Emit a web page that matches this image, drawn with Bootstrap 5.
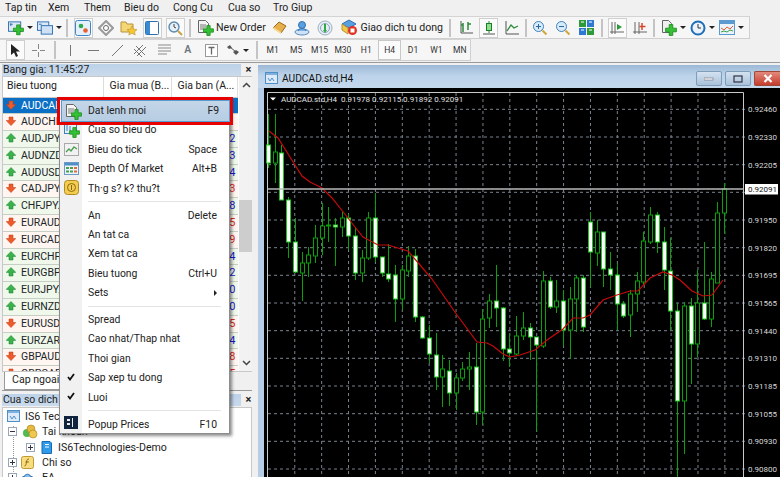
<!DOCTYPE html>
<html lang="vi">
<head>
<meta charset="utf-8">
<title>MetaTrader</title>
<link href="https://cdn.jsdelivr.net/npm/bootstrap@5.3.0/dist/css/bootstrap.min.css" rel="stylesheet">
<style>
html,body{height:100%}
body{width:780px;height:477px;overflow:hidden;background:#f0f0f0;font-family:Roboto,"Liberation Sans",sans-serif;font-size:10.5px;color:#222;position:relative}
.mt-menubar{height:16px;line-height:15px;font-size:10.5px;position:relative}
.mt-menubar span{position:absolute;top:0}
.mt-tools{height:23px;background:#f6f6f6;border-top:1px solid #d4d4d4;border-bottom:1px solid #cfcfcf;flex:none}
.mt-t1{width:750px;border-right:1px solid #d0d0d0}
.mt-t2{width:471px;border-right:1px solid #d0d0d0;height:22px;margin-top:0}
.mt-grip{width:3.5px;height:100%;flex:none}
.mt-btn{width:23px;height:20px;flex:none;display:flex;align-items:center;justify-content:center;position:relative}
.mt-t2 .mt-btn{width:23.5px}
.mt-btn.on::before{content:"";position:absolute;left:2px;right:2px;top:0;bottom:0;background:#fbfbfb;border:1px solid #cfcfcf}
.mt-btn svg{position:relative}
.mt-cbtn{width:29px;height:20px;flex:none;display:flex;align-items:center;padding-left:4px;gap:3px}
.mt-caret{width:0;height:0;border-left:3px solid transparent;border-right:3px solid transparent;border-top:3px solid #222}
.mt-sep{flex:none;height:18px;display:flex;justify-content:center}
.mt-sep::before{content:"";width:2px;background:#c4c4c4;height:100%}
.sw10{width:10px}.sw7{width:7.5px}.sw9{width:9px}.sw5{width:5.5px}.sw8{width:8px}
.mt-lbtn{height:20px;display:flex;align-items:center;flex:none;font-size:10.6px;white-space:nowrap}
.lb-order{width:73.5px;padding-left:3px;gap:2px}
.lb-auto{width:108.5px;padding-left:4px;gap:3px}
.mt-per{width:23.4px;height:20px;flex:none;display:flex;align-items:center;justify-content:center;font-size:8.5px;color:#333}
.mt-per.on{background:#fbfbfb;border:1px solid #c8c8c8}
.mt-work{height:415px;border-top:1px solid #9a9a9a;margin-top:1px}
.mt-left{width:254px;flex:none;padding-top:1px}
.mt-ptitle{height:12px;line-height:12px;width:240px;margin-left:2px;background:linear-gradient(#bdd2e8,#c9daec);padding-left:1px;font-size:10.5px;color:#222;white-space:nowrap}
.mt-x{font-size:11px;font-weight:700;line-height:12px;width:14px;text-align:center;color:#222;margin-left:-1px;padding-left:3px}
.mt-grid{height:296px;margin:0 0 0 2px;background:#fff;border:1px solid #c8c8c8;border-right:0;overflow:hidden;width:250px}
.mt-tablewrap{width:235px;flex:none;overflow:hidden}
.mt-table{width:235px;table-layout:fixed;margin:0;border-collapse:collapse;font-size:10.5px}
.mt-table th{height:20px;font-weight:400;font-size:10.5px;padding:0 0 2px 4px;vertical-align:middle;border-right:1px solid #ddd;border-bottom:1px solid #c8c8c8;white-space:nowrap;overflow:hidden;background:#fff;color:#222}
.mt-table th.c2,.mt-table th.c3{padding-left:6px}
.mt-table td{height:16.8px;padding:0;line-height:15px;border-bottom:1px solid #c6cfc6;white-space:nowrap;overflow:hidden;box-sizing:border-box}
.mt-table .c1{width:100px}.mt-table .c2{width:68px}
.mt-table td.sym{padding-left:3px}
.mt-table td svg{vertical-align:-1px;margin-right:5px}
.mt-table td.px{text-align:right;padding-right:2px;font-size:11px}
.r-up td{background:#eff8ea}
.r-dn td{background:#fff6f1}
.mt-table .r-sel td{background:#0b6fc6;color:#fff}
.mt-table td.px-b{color:#1a1ad0}.mt-table td.px-r{color:#e0281e}
.mt-scroll{width:14px;flex:none;background:#f2f2f2;margin-left:1px}
.mt-arrow{height:16px;display:flex;align-items:center;justify-content:center;flex:none}
.mt-thumb{height:52px;margin-top:107px;background:#cdcdcd}
.mt-tabs{height:19px;margin-left:2px;width:250px;border-bottom:1px solid #9a9a9a}
.mt-tab{width:62px;height:18px;background:#fff;border:1px solid #9a9a9a;border-top:0;padding-left:7px;font-size:10.6px;line-height:16px;margin-left:2px;color:#222;white-space:nowrap;overflow:hidden}
.mt-title2{margin-top:3px}
.mt-tree{height:74px;margin:1px 0 0 2px;padding-top:1px;background:#fff;border:1px solid #c8c8c8;width:250px;font-size:10.6px;position:relative;overflow:hidden;line-height:15px}
.mt-tree::before{content:"";position:absolute;left:10px;top:18px;bottom:0;border-left:1px dotted #999}
.mt-node{height:15.3px;display:flex;align-items:center;gap:3px;white-space:nowrap}
.nl0{padding-left:2px}.nl1{padding-left:5px}.nl2{padding-left:23px}
.mt-box{width:9px;height:9px;border:1px solid #9aa5b5;background:#fff;flex:none;position:relative;z-index:1}
.mt-box::before{content:"";position:absolute;left:1px;right:1px;top:3px;height:1px;background:#334}
.mt-box.pl::after{content:"";position:absolute;top:1px;bottom:1px;left:3px;width:1px;background:#334}
.mt-win{width:526px;flex:none;padding:2px 0 0 4px;overflow:hidden}
.mt-frame{width:522px;height:412px;background:#b6cde5;padding-left:6px;flex:none}
.mt-wtitle{height:23px;flex:none;margin-left:-6px;padding:4px 0 0 7px;background:linear-gradient(#9cb9d6,#bcd3ea 45%,#c4d8ec);font-size:10.2px;gap:3px;display:flex;align-items:center;color:#111}
.mt-wbtn{height:15px;border:1px solid #7f9cb8;border-radius:2px;background:linear-gradient(#d4e2f0,#a9c2da);flex:none;display:flex;align-items:center;justify-content:center;width:26px}
.mt-wbtn+.mt-wbtn{margin-left:3px}
.mt-wbtn.cls{background:linear-gradient(#e2897c,#c53c2c);border-color:#a04838;width:26px;border-right:0;border-radius:2px 0 0 2px;color:#fff}
.mt-chart{display:block;background:#000}
.mt-chart text{font-family:Roboto,"Liberation Sans",sans-serif}
.mt-pop{left:59px;top:97px;width:171px;height:337px;padding:2.8px 0 0;border:1px solid #8e8e8e;border-radius:0;box-shadow:2px 2px 3px rgba(0,0,0,.45);background:linear-gradient(90deg,#f1f1f1 22px,#fff 22px);margin:0;z-index:5}
.mt-pop .dropdown-item{height:19.4px;line-height:19px;padding:0 12px 0 28px;display:flex;align-items:center;color:#222;position:relative;font-size:10.4px;background:none;white-space:nowrap}
.mt-pop .dropdown-item>svg{position:absolute;left:4px;top:2px}
.mt-pop .dropdown-item.hot{margin:-1.3px 1px;height:22px;background:linear-gradient(#c4d6e8,#b7cde3);border:1px solid #5b9bd0;padding:0 10px 0 26px}
.mt-pop .dropdown-item.hot>svg{left:3px;top:2px}
.mt-pop hr.dropdown-divider{margin:3.3px 8px 3.3px 28px;border-top:1px solid #e4e4e4;opacity:1;height:0}
.mt-tri{width:0;height:0;border-top:3px solid transparent;border-bottom:3px solid transparent;border-left:3px solid #222}
.mt-red{position:absolute;left:57px;top:97px;width:176px;height:28px;border:3px solid #e60000;z-index:6;pointer-events:none}
</style>
</head>
<body>
<svg width="0" height="0" class="position-absolute">
<defs>
<symbol id="plus" viewBox="0 0 10 10"><path d="M3.5 .5h3v3h3v3h-3v3h-3v-3h-3v-3h3z" fill="#35c035" stroke="#1a8a1a" stroke-width=".7"/></symbol>
<symbol id="up" viewBox="0 0 10 10"><path d="M5 .5 9.8 5.4H7V9H3V5.4H.2z" fill="#3ab34a" stroke="#157a30" stroke-width=".5"/></symbol>
<symbol id="dn" viewBox="0 0 10 10"><path d="M3 1h4v3.5h2.8L5 9.6.2 4.5H3z" fill="#ee5a2c" stroke="#bb3a14" stroke-width=".5"/></symbol>
</defs>
</svg>

<div class="mt-menubar">
<span style="left:5px">Tap tin</span><span style="left:48px">Xem</span><span style="left:84px">Them</span><span style="left:124px">Bieu do</span><span style="left:173px">Cong Cu</span><span style="left:228px">Cua so</span><span style="left:273px">Tro Giup</span>
</div>

<div class="mt-tools mt-t1 d-flex align-items-center">
<div class="mt-grip"></div>
<div class="mt-cbtn"><svg width="17" height="16" viewBox="0 0 17 16"><rect x=".5" y="1.5" width="13" height="10" fill="#dbe9f8" stroke="#2f6fb0"/><path d="M2 4h3M3 3v3" stroke="#2f6fb0"/><use href="#plus" x="5" y="4" width="12" height="12"/></svg><i class="mt-caret"></i></div>
<div class="mt-cbtn"><svg width="17" height="16" viewBox="0 0 17 16"><rect x=".5" y="1.5" width="12" height="9" fill="#dbe9f8" stroke="#2f6fb0"/><rect x="4.5" y="5.5" width="12" height="9" fill="#cfe1f5" stroke="#2f6fb0"/><path d="M2 4h3" stroke="#2f6fb0"/></svg><i class="mt-caret"></i></div>
<div class="mt-sep sw10"></div>
<div class="mt-btn on"><svg width="16" height="16" viewBox="0 0 16 16"><rect x=".5" y=".5" width="15" height="15" rx="2" fill="#e4f0fb" stroke="#3c86c8"/><circle cx="6" cy="6" r="2.3" fill="#2fa84a"/><circle cx="10.5" cy="10.5" r="2.3" fill="#e8602c"/></svg></div>
<div class="mt-btn"><svg width="16" height="16" viewBox="0 0 16 16"><path d="M8 1 15 8 8 15 1 8z" fill="none" stroke="#9a9a9a" stroke-width="2"/><circle cx="8" cy="8" r="2.5" fill="#fff" stroke="#666"/></svg></div>
<div class="mt-btn"><svg width="18" height="16" viewBox="0 0 18 16"><path d="M1 2h5l1 2h6v8H1z" fill="#f4d675" stroke="#b8923a"/><path d="M12 6l1.6 3.2 3.4.4-2.5 2.3.7 3.1-3.2-1.7-3.2 1.7.7-3.1-2.5-2.3 3.4-.4z" fill="#f6c62c" stroke="#b8923a" stroke-width=".6"/></svg></div>
<div class="mt-btn on"><svg width="16" height="16" viewBox="0 0 16 16"><rect x="1.5" y="1.5" width="13" height="13" rx="1" fill="#fff" stroke="#2f6fb0"/><rect x="2" y="2" width="4" height="12" fill="#3a8ad6"/></svg></div>
<div class="mt-btn on"><svg width="16" height="16" viewBox="0 0 16 16"><circle cx="7" cy="7" r="5" fill="#e6f0f8" stroke="#5b8ab0" stroke-width="1.4"/><path d="M7 4v3l2 1" stroke="#444" fill="none"/><path d="M11 11l4 4" stroke="#c8a040" stroke-width="2"/></svg></div>
<div class="mt-sep sw7"></div>
<div class="mt-lbtn lb-order"><svg width="17" height="17" viewBox="0 0 17 17"><path d="M1.5 1.5h7l3 3v9h-10z" fill="#f4f4f4" stroke="#666"/><path d="M3 6h6M3 8h6M3 10h4" stroke="#777"/><use href="#plus" x="6" y="6" width="11" height="11"/></svg><span>New Order</span></div>
<div class="mt-btn"><svg width="15" height="15" viewBox="0 0 15 15"><path d="M1 8 7 2l7 4-5 7z" fill="#e8b04a" stroke="#9a6a1c"/><path d="M1 8l8 5" stroke="#f6dc9a" stroke-width="1.5"/></svg></div>
<div class="mt-btn"><svg width="16" height="16" viewBox="0 0 16 16"><ellipse cx="8" cy="12" rx="7" ry="3" fill="#cfe2f5" stroke="#5b8ac0"/><circle cx="8" cy="5" r="3.5" fill="#5aa0e0" stroke="#2f6fb0"/><path d="M4 11c0-3 8-3 8 0" fill="#7ab4ea" stroke="#2f6fb0"/></svg></div>
<div class="mt-btn"><svg width="16" height="16" viewBox="0 0 16 16"><circle cx="8" cy="8" r="7" fill="#e8eef4" stroke="#9ab0c4"/><circle cx="8" cy="8" r="4.5" fill="none" stroke="#8aa6c0"/><path d="M8 4v7" stroke="#2fa84a" stroke-width="2"/><path d="M6 10l2 3 2-3z" fill="#2fa84a"/></svg></div>
<div class="mt-lbtn lb-auto"><svg width="17" height="17" viewBox="0 0 17 17"><path d="M1 5 8 1l7 4-7 4z" fill="#5aa0e0" stroke="#2f6fb0"/><path d="M1 5v6l6 4V9z" fill="#f2c84a" stroke="#b8923a"/><circle cx="11.5" cy="11.5" r="4.5" fill="#e03020"/><rect x="9.5" y="9.5" width="4" height="4" fill="#fff"/></svg><span>Giao dich tu dong</span></div>
<div class="mt-sep sw9"></div>
<div class="mt-btn"><svg width="16" height="16" viewBox="0 0 16 16"><path d="M3 1v12h12" stroke="#555" fill="none"/><path d="M5 3v9M3 5h2M10 2v8M10 4h3" stroke="#2a8a3a" stroke-width="1.5" fill="none"/></svg></div>
<div class="mt-btn on"><svg width="16" height="16" viewBox="0 0 16 16"><path d="M2 14h12" stroke="#555"/><path d="M8 1v12" stroke="#2a8a3a"/><rect x="5.5" y="3.5" width="5" height="7" fill="#8ee08a" stroke="#1a7a2a"/></svg></div>
<div class="mt-btn"><svg width="16" height="16" viewBox="0 0 16 16"><path d="M2 1v13h13" stroke="#555" fill="none"/><path d="M3 11l4-6 3 3 4-2" stroke="#2a8a3a" fill="none" stroke-width="1.3"/></svg></div>
<div class="mt-sep sw5"></div>
<div class="mt-btn"><svg width="16" height="16" viewBox="0 0 16 16"><circle cx="6.5" cy="6.5" r="5" fill="#d8ebfa" stroke="#3f82bb"/><path d="M4 6.5h5M6.5 4v5" stroke="#2a6a9a"/><path d="M10.5 10.5l4 4" stroke="#d0a838" stroke-width="2"/></svg></div>
<div class="mt-btn"><svg width="16" height="16" viewBox="0 0 16 16"><circle cx="6.5" cy="6.5" r="5" fill="#d8ebfa" stroke="#3f82bb"/><path d="M4 6.5h5" stroke="#2a6a9a"/><path d="M10.5 10.5l4 4" stroke="#d0a838" stroke-width="2"/></svg></div>
<div class="mt-btn"><svg width="15" height="15" viewBox="0 0 15 15"><rect width="7" height="7" fill="#2f9a3a"/><rect x="8" width="7" height="7" fill="#2f7ad0"/><rect y="8" width="7" height="7" fill="#2f7ad0"/><rect x="8" y="8" width="7" height="7" fill="#2f9a3a"/><path d="M2 2h3M10 2h3M2 10h3M10 10h3" stroke="#fff"/></svg></div>
<div class="mt-sep sw8"></div>
<div class="mt-btn on"><svg width="16" height="16" viewBox="0 0 16 16"><path d="M3 2v12M1 12h14M6 2v12" stroke="#666" fill="none"/><path d="M8 4l5 3-5 3z" fill="#2a9a3a"/></svg></div>
<div class="mt-btn"><svg width="16" height="16" viewBox="0 0 16 16"><path d="M3 2v12M1 12h14M7 2v12" stroke="#666" fill="none"/><path d="M10 3v7M7.5 6.5h6" stroke="#d8452c" stroke-width="1.5"/></svg></div>
<div class="mt-sep sw5"></div>
<div class="mt-cbtn"><svg width="16" height="17" viewBox="0 0 16 17"><path d="M1.5 1.5h6l3 3v9h-9z" fill="#f0f0f0" stroke="#666"/><use href="#plus" x="4" y="5" width="12" height="12"/></svg><i class="mt-caret"></i></div>
<div class="mt-cbtn"><svg width="16" height="16" viewBox="0 0 16 16"><circle cx="8" cy="8" r="6.5" fill="#eaf3fb" stroke="#1f6fb8" stroke-width="2"/><path d="M8 4v4h3" stroke="#333" fill="none"/></svg><i class="mt-caret"></i></div>
<div class="mt-cbtn"><svg width="16" height="15" viewBox="0 0 16 15"><rect x=".5" y=".5" width="15" height="14" fill="#eaf2fa" stroke="#5b9ad0"/><rect x="1" y="1" width="14" height="3" fill="#5b9ad0"/><path d="M2 8l3 2 3-3 3 2 3-3" stroke="#e06030" fill="none"/><path d="M2 12l3-1 3 1 3-2 3 1" stroke="#3aa04a" fill="none"/></svg><i class="mt-caret"></i></div>
</div>

<div class="mt-tools mt-t2 d-flex align-items-center">
<div class="mt-grip"></div>
<div class="mt-btn on"><svg width="12" height="15" viewBox="0 0 12 15"><path d="M2 1v11l3-2.5 2 4.5 2-1-2-4.500h4z" fill="#222"/></svg></div>
<div class="mt-btn"><svg width="15" height="15" viewBox="0 0 15 15"><path d="M7.5 1v5M7.5 9v5M1 7.5h5M9 7.5h5" stroke="#888"/></svg></div>
<div class="mt-sep sw8"></div>
<div class="mt-btn"><svg width="15" height="15" viewBox="0 0 15 15"><path d="M7.5 2v11" stroke="#777"/></svg></div>
<div class="mt-btn"><svg width="15" height="15" viewBox="0 0 15 15"><path d="M2 7.5h11" stroke="#777"/></svg></div>
<div class="mt-btn"><svg width="15" height="15" viewBox="0 0 15 15"><path d="M2 13 13 2" stroke="#777"/></svg></div>
<div class="mt-btn"><svg width="15" height="15" viewBox="0 0 15 15"><path d="M1 11 10 2M4 13l9-9M1 6l8 8M3 3l9 9" stroke="#777"/></svg></div>
<div class="mt-btn"><svg width="15" height="15" viewBox="0 0 15 15"><path d="M1 2h13M1 5h13M1 8h13M1 11h9" stroke="#8a8a8a"/></svg></div>
<div class="mt-btn"><span class="fw-semibold text-secondary">A</span></div>
<div class="mt-btn"><svg width="15" height="15" viewBox="0 0 15 15"><rect x="1.5" y="1.5" width="12" height="12" fill="#fff" stroke="#999"/><path d="M4.5 4.5h6M7.5 4.5v7" stroke="#666" stroke-width="1.3"/></svg></div>
<div class="mt-cbtn"><svg width="13" height="13" viewBox="0 0 13 13"><path d="M0 3l3-2 2 3-3 1zM6 8l3-2 3 2-3 3z" fill="#555"/><path d="M3 3l6 5" stroke="#555"/></svg><i class="mt-caret"></i></div>
<div class="mt-sep sw9"></div>
<div class="mt-per">M1</div><div class="mt-per">M5</div><div class="mt-per">M15</div><div class="mt-per">M30</div><div class="mt-per">H1</div><div class="mt-per on">H4</div><div class="mt-per">D1</div><div class="mt-per">W1</div><div class="mt-per">MN</div>
</div>

<div class="mt-work d-flex">
<div class="mt-left">
  <div class="d-flex align-items-center"><div class="mt-ptitle">Bang gia: 11:45:27</div><div class="mt-x">×</div></div>
  <div class="mt-grid d-flex">
    <div class="mt-tablewrap">
    <table class="table mt-table">
      <thead><tr><th class="c1">Bieu tuong</th><th class="c2">Gia mua (B...</th><th class="c3">Gia ban (A...</th></tr></thead>
      <tbody>
      <tr class="r-sel"><td class="sym"><svg width="10" height="10"><use href="#dn"/></svg>AUDCAD.std</td><td></td><td class="px"></td></tr>
      <tr class="r-dn"><td class="sym"><svg width="10" height="10"><use href="#dn"/></svg>AUDCHF.std</td><td></td><td class="px"></td></tr>
      <tr class="r-up"><td class="sym"><svg width="10" height="10"><use href="#up"/></svg>AUDJPY.std</td><td></td><td class="px px-b">2</td></tr>
      <tr class="r-up"><td class="sym"><svg width="10" height="10"><use href="#up"/></svg>AUDNZD.std</td><td></td><td class="px px-b">3</td></tr>
      <tr class="r-up"><td class="sym"><svg width="10" height="10"><use href="#up"/></svg>AUDUSD.std</td><td></td><td class="px px-b">4</td></tr>
      <tr class="r-dn"><td class="sym"><svg width="10" height="10"><use href="#dn"/></svg>CADJPY.std</td><td></td><td class="px px-r">3</td></tr>
      <tr class="r-up"><td class="sym"><svg width="10" height="10"><use href="#up"/></svg>CHFJPY.std</td><td></td><td class="px px-b">8</td></tr>
      <tr class="r-dn"><td class="sym"><svg width="10" height="10"><use href="#dn"/></svg>EURAUD.std</td><td></td><td class="px px-r">5</td></tr>
      <tr class="r-dn"><td class="sym"><svg width="10" height="10"><use href="#dn"/></svg>EURCAD.std</td><td></td><td class="px px-r">9</td></tr>
      <tr class="r-up"><td class="sym"><svg width="10" height="10"><use href="#up"/></svg>EURCHF.std</td><td></td><td class="px px-b">4</td></tr>
      <tr class="r-up"><td class="sym"><svg width="10" height="10"><use href="#up"/></svg>EURGBP.std</td><td></td><td class="px px-b">2</td></tr>
      <tr class="r-up"><td class="sym"><svg width="10" height="10"><use href="#up"/></svg>EURJPY.std</td><td></td><td class="px px-b">0</td></tr>
      <tr class="r-up"><td class="sym"><svg width="10" height="10"><use href="#up"/></svg>EURNZD.std</td><td></td><td class="px px-b">0</td></tr>
      <tr class="r-dn"><td class="sym"><svg width="10" height="10"><use href="#dn"/></svg>EURUSD.std</td><td></td><td class="px px-r">5</td></tr>
      <tr class="r-up"><td class="sym"><svg width="10" height="10"><use href="#up"/></svg>EURZAR.std</td><td></td><td class="px px-b">4</td></tr>
      <tr class="r-dn"><td class="sym"><svg width="10" height="10"><use href="#dn"/></svg>GBPAUD.std</td><td></td><td class="px px-r">8</td></tr>
      <tr class="r-dn"><td class="sym"><svg width="10" height="10"><use href="#dn"/></svg>GBPCAD.std</td><td></td><td class="px px-r">5</td></tr>
      </tbody>
    </table>
    </div>
    <div class="mt-scroll d-flex flex-column">
      <div class="mt-arrow"><svg width="9" height="6" viewBox="0 0 9 6"><path d="M1 5l3.5-3.5L8 5" fill="none" stroke="#444" stroke-width="1.5"/></svg></div>
      <div class="mt-thumb"></div>
      <div class="mt-arrow mt-auto"><svg width="9" height="6" viewBox="0 0 9 6"><path d="M1 1l3.5 3.5L8 1" fill="none" stroke="#444" stroke-width="1.5"/></svg></div>
    </div>
  </div>
  <div class="mt-tabs"><div class="mt-tab">Cap ngoai te</div></div>
  <div class="d-flex align-items-center mt-title2"><div class="mt-ptitle">Cua so dich chuyen</div><div class="mt-x">×</div></div>
  <div class="mt-tree">
    <div class="mt-node nl0"><svg width="17" height="15" viewBox="0 0 17 15"><rect x="2.5" y="1.5" width="12" height="11" fill="#dceafa" stroke="#4f8fc8"/><rect x="3" y="2" width="11" height="2" fill="#7fb0de"/><path d="M5 7l2 3 2-3 2 3" stroke="#4f8fc8" fill="none"/></svg><span>IS6 Technologies MT4</span></div>
    <div class="mt-node nl1"><i class="mt-box"></i><svg width="19" height="15" viewBox="0 0 17 15"><circle cx="6" cy="9" r="4" fill="#4fbc4f"/><circle cx="10" cy="5" r="4" fill="#e8b840" stroke="#a88020" stroke-width=".6"/><circle cx="12" cy="10" r="4" fill="#f0c850" stroke="#a88020" stroke-width=".6"/></svg><span>Tai khoan</span></div>
    <div class="mt-node nl2"><i class="mt-box pl"></i><svg width="17" height="15" viewBox="0 0 17 15"><path d="M4 1.5h8l1.5 1.5v10.5H4z" fill="#2f9ae8" stroke="#1a6ab0"/><path d="M7 4.5h4M7 7h4" stroke="#fff"/></svg><span>IS6Technologies-Demo</span></div>
    <div class="mt-node nl1"><i class="mt-box pl"></i><svg width="15" height="15" viewBox="0 0 15 15"><rect x="1.5" y="1.5" width="12" height="12" rx="2" fill="#f8dc80" stroke="#c09a30"/><path d="M9 4c-2 0-2 1-2.5 3S6 11 4.5 11M5.5 7h3.5" stroke="#8a6a10" fill="none"/></svg><span class="ms-1">Chi so</span></div>
    <div class="mt-node nl1"><i class="mt-box pl"></i><svg width="15" height="15" viewBox="0 0 15 15"><ellipse cx="7.5" cy="9" rx="7" ry="3" fill="#5a9ad8" stroke="#2f6fb0"/><path d="M4 8c0-5 7-5 7 0" fill="#8abce8" stroke="#2f6fb0"/></svg><span class="ms-1">EA</span></div>
  </div>
</div>

<div class="mt-win">
  <div class="mt-frame d-flex flex-column">
    <div class="mt-wtitle">
      <svg width="14" height="14" viewBox="0 0 14 14"><rect x=".5" y=".5" width="12" height="11" fill="#dceafa" stroke="#4f8fc8"/><rect x="1" y="1" width="11" height="2" fill="#7fb0de"/><path d="M3 6l2 3 2-3 2 3" stroke="#4f8fc8" fill="none"/></svg>
      <span>AUDCAD.std,H4</span>
      <div class="d-flex ms-auto">
        <div class="mt-wbtn"><svg width="10" height="4"><rect y="1" width="9" height="2" fill="#fff" stroke="#556" stroke-width=".5"/></svg></div>
        <div class="mt-wbtn"><svg width="10" height="8"><rect x="1" y="1" width="8" height="6" fill="none" stroke="#334" stroke-width="1.2"/></svg></div>
        <div class="mt-wbtn cls"><svg width="10" height="9" viewBox="0 0 10 9"><path d="M1.5 1l7 7M8.5 1l-7 7" stroke="#fff" stroke-width="2.2"/></svg></div>
      </div>
    </div>
    <svg id="mtChart" class="mt-chart" width="516" height="389" viewBox="264 88 516 389"></svg>
  </div>
</div>
</div>

<div class="dropdown-menu d-block position-absolute mt-pop">
  <a class="dropdown-item hot"><svg width="17" height="17" viewBox="0 0 17 17"><path d="M1.5 1.5h7l3 3v9h-10z" fill="#f4f4f4" stroke="#666"/><path d="M3 6h6M3 8h6M3 10h4" stroke="#777"/><use href="#plus" x="6" y="6" width="11" height="11"/></svg>Dat lenh moi<span class="ms-auto">F9</span></a>
  <a class="dropdown-item"><svg width="16" height="16" viewBox="0 0 16 16"><rect x=".5" y="1.5" width="12" height="10" fill="#e4effa" stroke="#3f82bb"/><path d="M3 3v6M6 4v5" stroke="#3f82bb"/><use href="#plus" x="5" y="5" width="11" height="11"/></svg>Cua so bieu do</a>
  <a class="dropdown-item"><svg width="15" height="15" viewBox="0 0 15 15"><rect x=".5" y="1.5" width="14" height="12" fill="#f2f2f2" stroke="#aaa"/><path d="M2 10l3-3 2 2 3-4 3 2" stroke="#4aa050" fill="none" stroke-width="1.3"/></svg>Bieu do tick<span class="ms-auto">Space</span></a>
  <a class="dropdown-item"><svg width="15" height="15" viewBox="0 0 15 15"><rect x=".5" y="1.5" width="14" height="12" fill="#eef4fa" stroke="#6a9ac8"/><rect x="1" y="2" width="13" height="2.5" fill="#4f8fc8"/><path d="M2 6h3v2H2zM6 6h3v2H6zM2 9.5h3v2H2zM6 9.5h3v2H6z" fill="#4aa050"/><path d="M10 6h3v2h-3zM10 9.5h3v2h-3z" fill="#e06a40"/></svg>Depth Of Market<span class="ms-auto">Alt+B</span></a>
  <a class="dropdown-item"><svg width="15" height="15" viewBox="0 0 15 15"><rect x=".5" y=".5" width="14" height="14" rx="3" fill="#f3cc50" stroke="#b08a20"/><circle cx="7.5" cy="7.5" r="4" fill="none" stroke="#8a6a10"/><path d="M7.5 5v5" stroke="#8a6a10"/></svg>Th·g s? k? thu?t</a>
  <hr class="dropdown-divider">
  <a class="dropdown-item">An<span class="ms-auto">Delete</span></a>
  <a class="dropdown-item">An tat ca</a>
  <a class="dropdown-item">Xem tat ca</a>
  <a class="dropdown-item">Bieu tuong<span class="ms-auto">Ctrl+U</span></a>
  <a class="dropdown-item">Sets<i class="mt-tri ms-auto"></i></a>
  <hr class="dropdown-divider">
  <a class="dropdown-item">Spread</a>
  <a class="dropdown-item">Cao nhat/Thap nhat</a>
  <a class="dropdown-item">Thoi gian</a>
  <a class="dropdown-item"><svg width="14" height="14" viewBox="0 0 14 14"><path d="M4 7l2 2.5L10 4" fill="none" stroke="#111" stroke-width="1.8"/></svg>Sap xep tu dong</a>
  <a class="dropdown-item"><svg width="14" height="14" viewBox="0 0 14 14"><path d="M4 7l2 2.5L10 4" fill="none" stroke="#111" stroke-width="1.8"/></svg>Luoi</a>
  <hr class="dropdown-divider">
  <a class="dropdown-item"><svg width="14" height="14" viewBox="0 0 14 14"><rect width="14" height="13" fill="#10233f"/><path d="M3 3h3v2H3zM3 7h3v2H3z" fill="#eee"/><path d="M8 2h1v9H8z" fill="#eee"/></svg>Popup Prices<span class="ms-auto">F10</span></a>
</div>
<div class="mt-red"></div>

<script>
(function(){
var s=document.getElementById('mtChart'),h='';
var vx=[];for(var i=0;i<18;i++)vx.push(267.9+26.88*i);
var hy=[109.3,137,164.7,192.3,220,247.7,275.3,303,330.7,358.3,386,413.7,441.3,469];
var lab=['0.92460','0.92330','0.92205','','0.91950','0.91820','0.91695','0.91565','0.91440','0.91310','0.91185','0.91055','0.90930','0.90800'];
vx.slice(1).forEach(function(x){if(x<743)h+='<path d="M'+x+' 93V477" stroke="#79838e" stroke-dasharray="3 3"/>'});
hy.forEach(function(y,i){h+='<path d="M268 '+y+'H746" stroke="#79838e" stroke-dasharray="3 3"/>';if(lab[i])h+='<text x="748" y="'+(y+3)+'" fill="#d9d9d9" font-size="8">'+lab[i]+'</text>'});
h+='<path d="M267.5 477V92.5H743.5V477" fill="none" stroke="#c9c9c9"/>';
// x, wickHigh, wickLow, bodyTop, bodyBottom, white(1)/hollow(0)
var c=[[268,114,168,145,163,1],[274.7,114,183,152,163,0],[281,145,200,153,200,1],[288,197,258,200,242,1],[295,218,273,242,272,1],[301.5,252,301,263,273,0],[308,247,277,255,263,0],[315,225,263,238,256,0],[321.7,203,255,226,238,0],[328,207,242,225,226,0],[335,218,266,225,227,1],[342,212,237,218,227,0],[348,214,250,218,236,1],[355,227,280,236,273,1],[362,250,282,258,273,0],[368,212,260,218,258,0],[375,193,262,218,257,1],[382,257,277,257,273,1],[388,244,282,274,279,1],[395,265,322,275,299,1],[402,265,310,270,299,0],[408,246,277,256,271,0],[415,249,322,256,317,1],[422,316,339,317,338,1],[429,325,363,338,354,1],[436,333,390,355,377,1],[442,355,407,369,377,0],[449,360,406,371,393,1],[456,373,410,378,393,0],[462,362,381,369,378,0],[469,352,390,367,369,0],[476,343,425,367,412,1],[482,309,425,319,412,0],[489,294,328,301,318,0],[496,265,327,301,308,1],[503,307,361,308,349,1],[509,334,367,349,353,1],[516,316,355,336,354,0],[523,312,340,328,336,0],[530,323,360,328,337,1],[536,337,431,337,345,1],[543,271,348,281,346,0],[550,277,309,281,307,1],[556,280,313,301,307,0],[563,290,346,301,330,1],[570,287,359,299,330,0],[576,275,332,278,299,0],[583,275,332,278,327,1],[590,212,287,222,252,1],[597,220,266,232,253,0],[603,232,287,232,269,1],[610,252,290,269,275,1],[617,263,330,275,304,1],[623,301,318,304,316,1],[630,290,337,294,315,0],[637,272,312,281,294,0],[643,232,285,241,282,0],[650,207,244,215,242,0],[657,212,253,215,242,1],[664,227,290,242,270,1],[670,238,330,271,311,1],[677,303,477,311,401,1],[684,302,454,306,401,0],[691,298,384,306,344,1],[697,270,357,303,344,0],[704,242,320,303,319,1],[711,272,327,279,319,0],[717,202,283,213,283,0],[724,183,234,189,213,0]];
c.forEach(function(k){
 var x=Math.round(k[0])+.5;
 h+='<path d="M'+x+' '+k[1]+'V'+k[2]+'" stroke="#0aa00a" stroke-width="1"/>';
 h+='<rect x="'+(x-2)+'" y="'+k[3]+'" width="4" height="'+Math.max(k[4]-k[3],1)+'" fill="'+(k[5]?'#fff':'#000')+'" stroke="'+(k[5]?'#19c819':'#0aa00a')+'"/>';
});
var ma='269,131 278,138 290,157 302,176 310,182 322,188 332,198 348,218 355,227 363,237 378,245 388,245 408,251 420,265 432,279 457,315 477,342 487,343 493,346 503,354 510,357 520,355 535,350 547,340 563,329 573,318 583,318 590,315 603,300 617,295 630,291 638,291 650,278 663,272 672,275 680,280 692,291 703,296 712,295 723,280';
h+='<polyline points="'+ma+'" fill="none" stroke="#c80a0a" stroke-width="1.2"/>';
h+='<path d="M268 189H744" stroke="#b9b9b9" stroke-width="1.5"/>';
h+='<rect x="745" y="184" width="33" height="10.5" fill="#fff"/><text x="748" y="192" fill="#111" font-size="8">0.92091</text>';
h+='<path d="M270 97.5h6l-3 3z" fill="#fff"/>';
h+='<text x="281" y="102" fill="#e2e2e2" font-size="8" xml:space="preserve">AUDCAD.std,H4  0.91978 0.92115 0.91892 0.92091</text>';
s.innerHTML=h;
})();
</script>
<script src="https://cdn.jsdelivr.net/npm/bootstrap@5.3.0/dist/js/bootstrap.bundle.min.js"></script>
</body>
</html>
